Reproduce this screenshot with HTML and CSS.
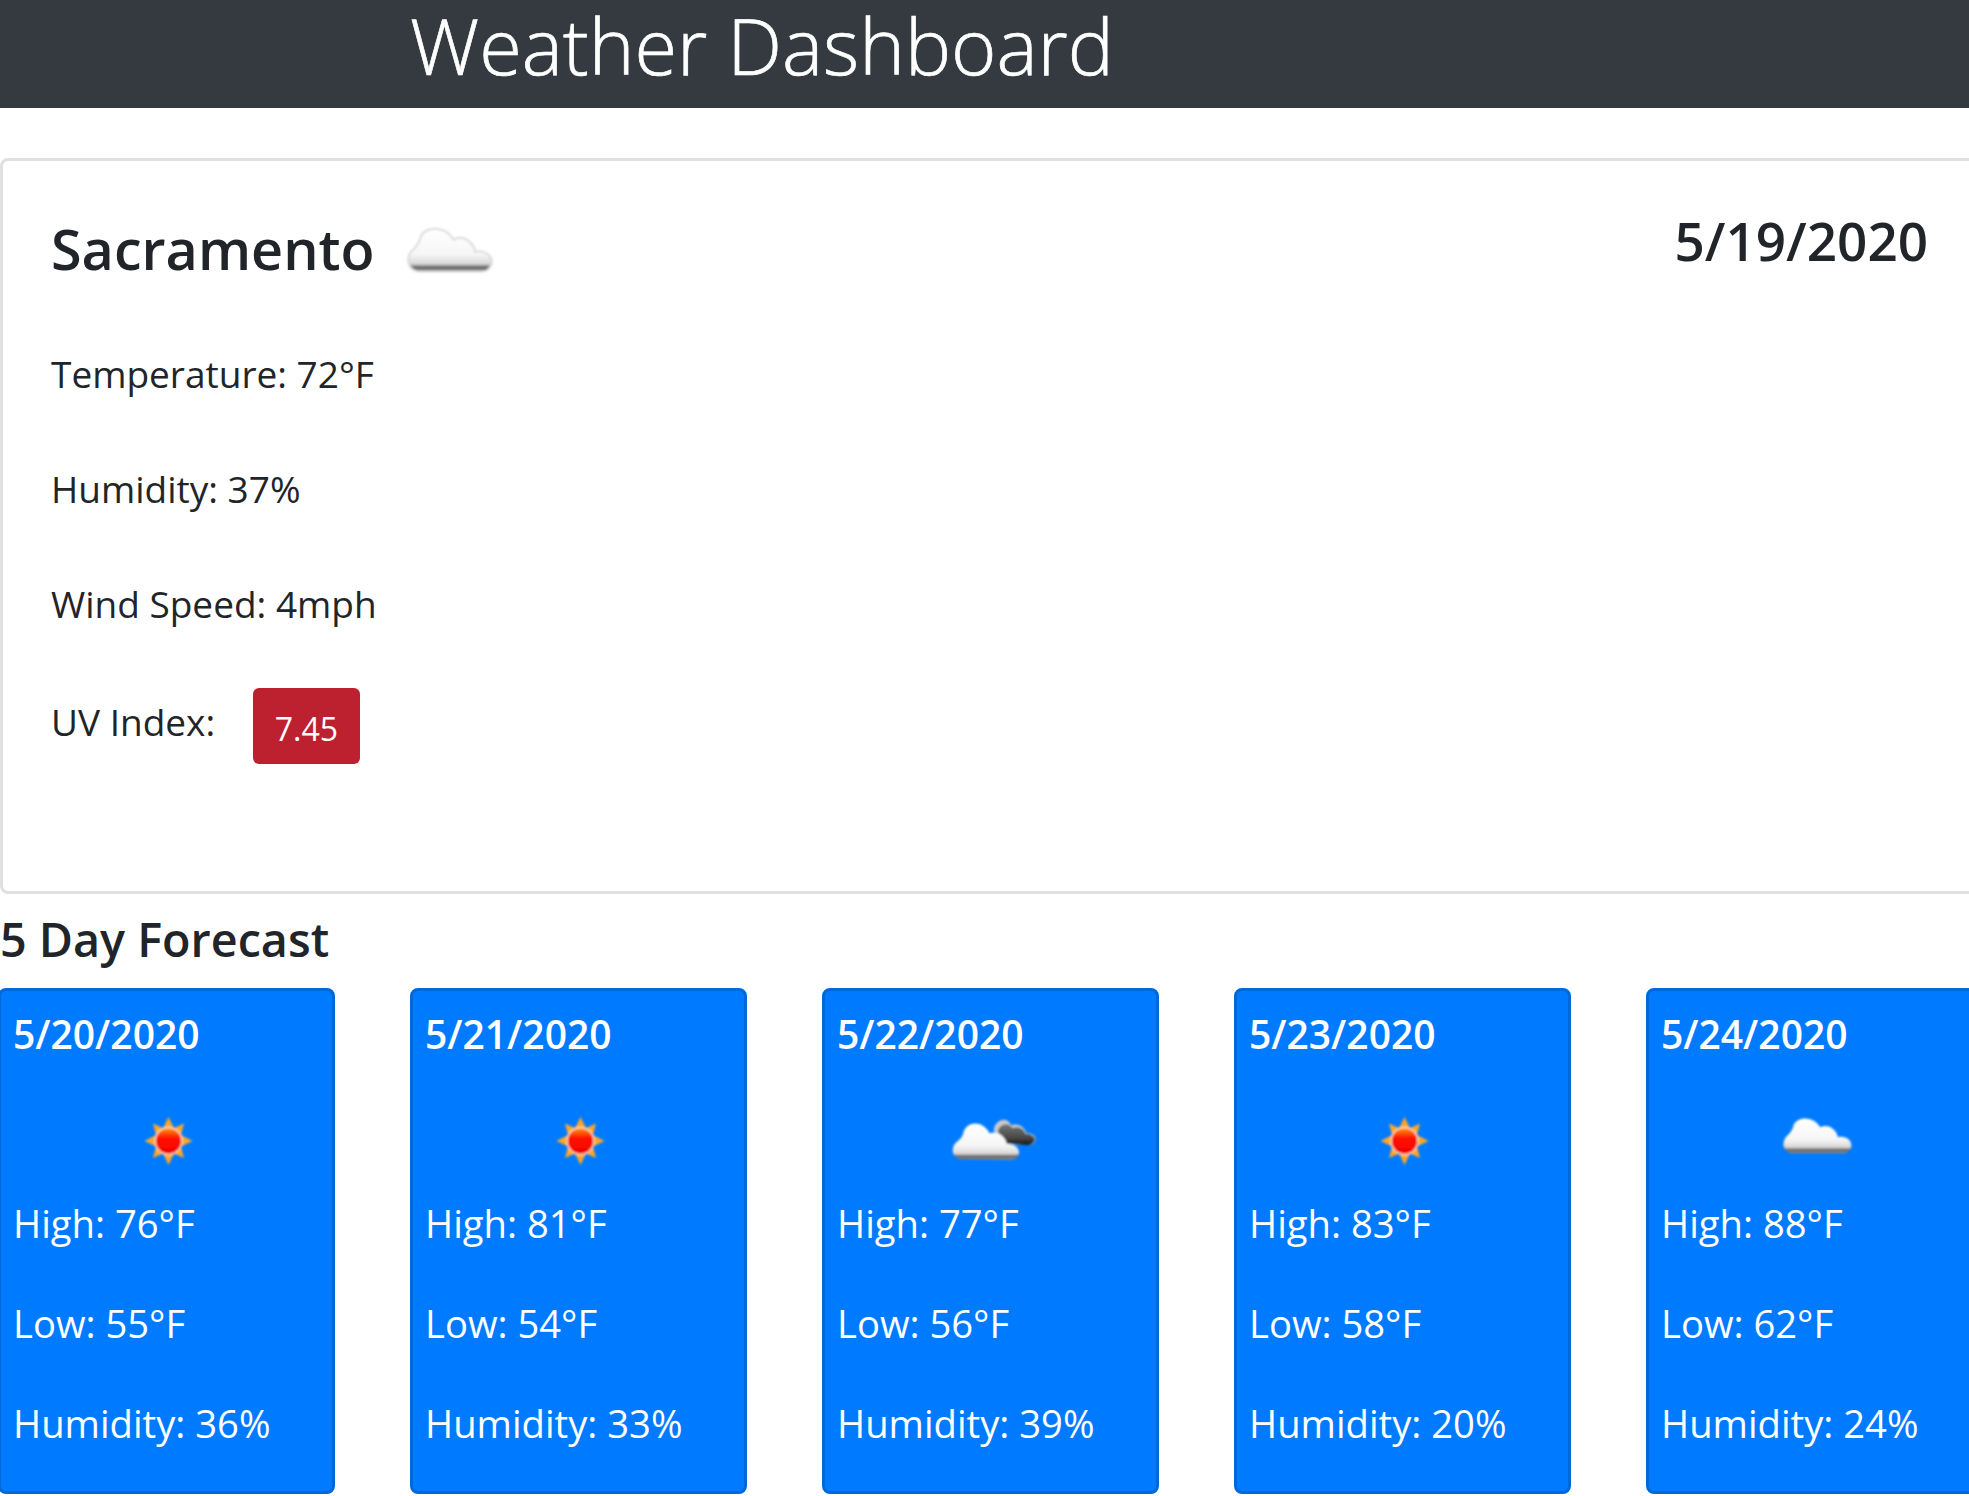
FILE: index.html
```html
<!DOCTYPE html>
<html lang="en">

<head>
    <meta charset="UTF-8">
    <meta name="viewport" content="width=device-width, initial-scale=1.0">
    <title>Weather Dashboard</title>
    <link rel="stylesheet" href="styles.css">
</head>

<body>

    <!-- shared icons -->
    <svg class="defs" aria-hidden="true">
        <defs>
            <linearGradient id="cloudFill" x1="0" y1="0" x2="0" y2="1">
                <stop offset="0" stop-color="#ffffff" />
                <stop offset="0.6" stop-color="#f6f6f6" />
                <stop offset="0.82" stop-color="#d8d8d8" />
                <stop offset="0.9" stop-color="#666666" />
                <stop offset="1" stop-color="#8a8a8a" />
            </linearGradient>
            <linearGradient id="darkFill" x1="0" y1="0" x2="0" y2="1">
                <stop offset="0" stop-color="#777777" />
                <stop offset="0.7" stop-color="#444444" />
                <stop offset="1" stop-color="#111111" />
            </linearGradient>
            <linearGradient id="sunFill" x1="0" y1="0" x2="0" y2="1">
                <stop offset="0" stop-color="#ffa000" />
                <stop offset="0.4" stop-color="#ff1000" />
                <stop offset="1" stop-color="#f00000" />
            </linearGradient>
            <filter id="soft" x="-10%" y="-10%" width="120%" height="120%">
                <feGaussianBlur stdDeviation="3" />
            </filter>
            <filter id="softSun" x="-10%" y="-10%" width="120%" height="120%">
                <feGaussianBlur stdDeviation="0.9" />
            </filter>
            <symbol id="cloud" viewBox="-24 0 360 210">
                <path filter="url(#soft)" fill="url(#cloudFill)" d="M85 160C58 155 54 122 75 105C82 97 90 88 92 75C102 50 150 46 172 82C192 70 220 85 225 112C245 106 268 120 265 140C262 155 250 160 240 160Z" />
            </symbol>
            <symbol id="cloud-grey" viewBox="0 0 300 210">
                <path filter="url(#soft)" fill="url(#cloudFill)" stroke="#dcdcdc" stroke-width="5" d="M85 160C58 155 54 122 75 105C82 97 90 88 92 75C102 50 150 46 172 82C192 70 220 85 225 112C245 106 268 120 265 140C262 155 250 160 240 160Z" />
            </symbol>
            <symbol id="clouds" viewBox="-6 0 360 210">
                <g filter="url(#soft)">
                    <path fill="#c9c9c9" d="M182 90C186 60 222 46 234 76C258 68 276 84 280 100C300 98 312 112 306 124C300 136 290 135 280 135L200 130Z" />
                    <path fill="url(#darkFill)" d="M195 95C198 72 226 64 238 84C258 76 274 88 278 102C296 100 310 112 304 124C298 135 290 135 280 135L210 130Z" />
                    <path fill="url(#cloudFill)" d="M80 178C56 172 52 140 72 125C82 118 90 108 92 95C104 62 150 62 170 100C190 92 215 105 222 132C240 130 260 142 258 160C256 174 245 180 235 180Z" />
                </g>
            </symbol>
            <symbol id="sun" viewBox="-14.5 0 120 70">
                <g filter="url(#softSun)">
                    <polygon fill="#ffa524" points="47,17 52.5,28 62.5,23.5 59.5,35 71,41 59.5,46.5 62.5,58 52.5,53.5 47,65 41.5,53.5 31.5,58 34.5,46.5 23,41 34.5,35 31.5,23.5 41.5,28" />
                    <circle cx="47" cy="41" r="13.5" fill="url(#sunFill)" stroke="#ffd9c4" stroke-width="1.5" />
                </g>
            </symbol>
        </defs>
    </svg>

    <header class="top-bar">
        <h1 class="top-title">Weather Dashboard</h1>
    </header>

    <main class="page">

        <section class="current">
            <div class="current-head">
                <h2 class="city">Sacramento
                    <svg class="icon-now"><use href="#cloud-grey"></use></svg>
                </h2>
                <h3 class="today">5/19/2020</h3>
            </div>
            <p class="stat">Temperature: 72°F</p>
            <p class="stat">Humidity: 37%</p>
            <p class="stat">Wind Speed: 4mph</p>
            <p class="stat stat-uv">UV Index: <span class="uv">7.45</span></p>
        </section>

        <h3 class="forecast-title">5 Day Forecast</h3>

        <section class="forecast">
            <div class="day">
                <h4 class="day-date">5/20/2020</h4>
                <svg class="day-icon"><use href="#sun"></use></svg>
                <p>High: 76°F</p>
                <p>Low: 55°F</p>
                <p>Humidity: 36%</p>
            </div>
            <div class="day">
                <h4 class="day-date">5/21/2020</h4>
                <svg class="day-icon"><use href="#sun"></use></svg>
                <p>High: 81°F</p>
                <p>Low: 54°F</p>
                <p>Humidity: 33%</p>
            </div>
            <div class="day">
                <h4 class="day-date">5/22/2020</h4>
                <svg class="day-icon"><use href="#clouds"></use></svg>
                <p>High: 77°F</p>
                <p>Low: 56°F</p>
                <p>Humidity: 39%</p>
            </div>
            <div class="day">
                <h4 class="day-date">5/23/2020</h4>
                <svg class="day-icon"><use href="#sun"></use></svg>
                <p>High: 83°F</p>
                <p>Low: 58°F</p>
                <p>Humidity: 20%</p>
            </div>
            <div class="day">
                <h4 class="day-date">5/24/2020</h4>
                <svg class="day-icon"><use href="#cloud"></use></svg>
                <p>High: 88°F</p>
                <p>Low: 62°F</p>
                <p>Humidity: 24%</p>
            </div>
        </section>

    </main>

</body>

</html>
```

FILE: styles.css
```css
html,
body {
    margin: 0;
    overflow: hidden;
}

body {
    font-family: "Open Sans", "Noto Sans", Arial, sans-serif;
    color: #212529;
    background-color: #fff;
    height: 1496px;
}

h1,
h2,
h3,
h4,
p {
    margin: 0;
    font-weight: normal;
}

.defs {
    display: block;
    width: 0;
    height: 0;
}

.top-bar {
    background-color: #343a40;
    height: 108px;
    padding-left: 410px;
}

.top-title {
    color: #fff;
    font-size: 77.5px;
    font-weight: 300;
    line-height: 90px;
    -webkit-text-stroke: 0.7px #fff;
}

.page {
    width: 1985px;
    padding-top: 50px;
}

.current {
    height: 736px;
    box-sizing: border-box;
    border: 3px solid #e0e0e0;
    border-radius: 8px;
    padding: 50px 54px 0 48px;
}

.current-head {
    display: flex;
    justify-content: space-between;
    height: 115px;
    margin-bottom: 24px;
}

.city {
    display: flex;
    align-items: flex-start;
    gap: 8px;
    font-size: 55.7px;
    font-weight: 600;
    line-height: 74px;
}

.icon-now {
    width: 123px;
    height: 86px;
    margin-top: -5px;
}

.today {
    font-size: 53px;
    font-weight: 600;
    line-height: 68px;
    margin-top: -4px;
}

.stat {
    font-size: 37px;
    line-height: 48px;
    margin-bottom: 67px;
}

.stat-uv {
    margin-top: -7px;
}

.uv {
    display: inline-block;
    background-color: #bd2130;
    color: #fff;
    font-size: 32px;
    line-height: 71px;
    padding: 5px 22px 0;
    margin-left: 28px;
    border-radius: 6px;
    vertical-align: middle;
}

.forecast-title {
    font-size: 46.7px;
    font-weight: 600;
    line-height: 60px;
    margin: 15px 0 19px;
}

.forecast {
    display: grid;
    grid-template-columns: repeat(5, 337px);
    column-gap: 75px;
    margin-left: -2px;
}

.day {
    height: 506px;
    box-sizing: border-box;
    background-color: #007bff;
    border: 3px solid #0069d9;
    border-radius: 8px;
    color: #fff;
    padding: 17px 12px;
}

.day-date {
    font-size: 39px;
    font-weight: 600;
    line-height: 52px;
}

.day-icon {
    display: block;
    width: 120px;
    height: 70px;
    margin: 40px auto 28px;
}

.day p {
    font-size: 38.2px;
    line-height: 50px;
    margin-bottom: 50px;
}
```
